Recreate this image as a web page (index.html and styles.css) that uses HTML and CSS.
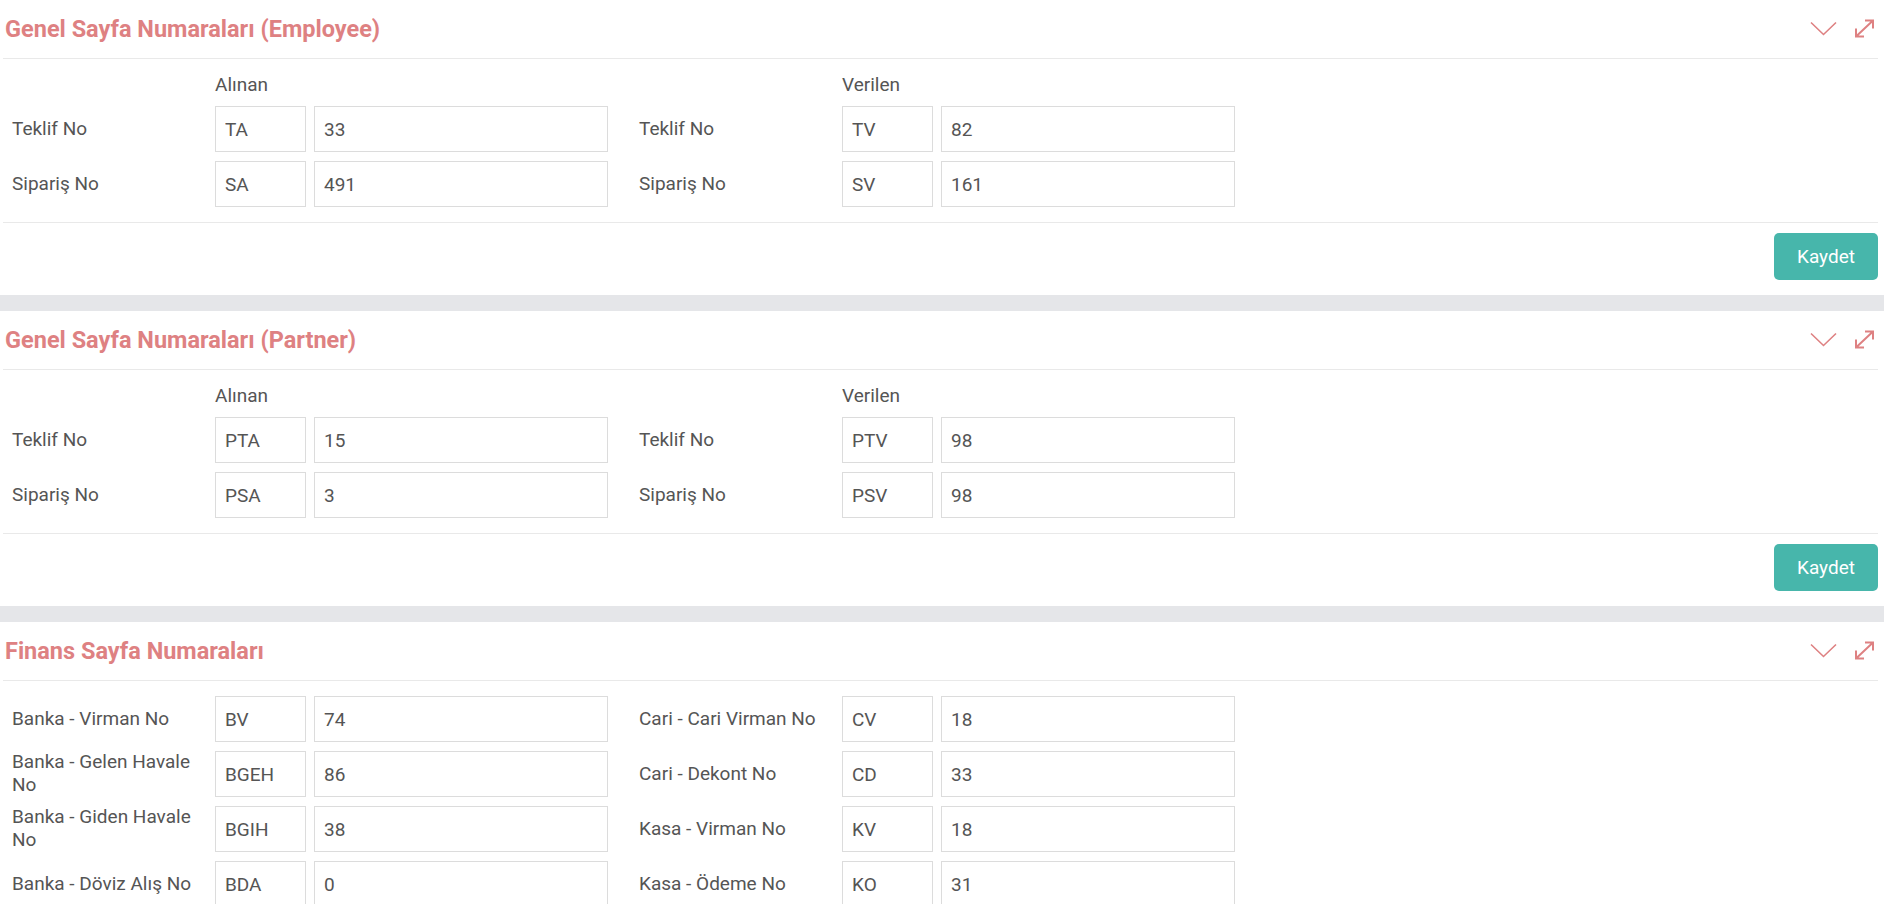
FILE: index.html
```html
<!DOCTYPE html>
<html lang="tr">

<head>
  <meta charset="utf-8">
  <title>Sayfa Numaraları</title>
  <link rel="stylesheet" href="styles.css">
</head>

<body>
  <!-- Genel (Employee) -->
  <div class="panel">
    <div class="panel-head">
      <h3>Genel Sayfa Numaraları (Employee)</h3>
      <div class="tools">
        <svg class="ico-collapse" width="27" height="15" viewBox="0 0 27 15"><polyline points="1,1.5 13.5,13.5 26,1.5" /></svg>
        <svg class="ico-expand" width="21" height="19" viewBox="0 0 21 19"><path d="M2 17.5 L19 1.5 M11 1.5 H19 V9.5 M2 9.5 V17.5 H10" /></svg>
      </div>
    </div>
    <div class="panel-body">
      <div class="row heads">
        <div class="pair"><span class="label"></span><span class="colhead">Alınan</span></div>
        <div class="pair"><span class="label"></span><span class="colhead">Verilen</span></div>
      </div>
      <div class="row">
        <div class="pair">
          <label class="label">Teklif No</label>
          <input class="prefix" type="text" value="TA">
          <input class="number" type="text" value="33">
        </div>
        <div class="pair">
          <label class="label">Teklif No</label>
          <input class="prefix" type="text" value="TV">
          <input class="number" type="text" value="82">
        </div>
      </div>
      <div class="row">
        <div class="pair">
          <label class="label">Sipariş No</label>
          <input class="prefix" type="text" value="SA">
          <input class="number" type="text" value="491">
        </div>
        <div class="pair">
          <label class="label">Sipariş No</label>
          <input class="prefix" type="text" value="SV">
          <input class="number" type="text" value="161">
        </div>
      </div>
    </div>
    <div class="panel-foot">
      <button type="button" class="btn-save">Kaydet</button>
    </div>
  </div>

  <!-- Genel (Partner) -->
  <div class="panel">
    <div class="panel-head">
      <h3>Genel Sayfa Numaraları (Partner)</h3>
      <div class="tools">
        <svg class="ico-collapse" width="27" height="15" viewBox="0 0 27 15"><polyline points="1,1.5 13.5,13.5 26,1.5" /></svg>
        <svg class="ico-expand" width="21" height="19" viewBox="0 0 21 19"><path d="M2 17.5 L19 1.5 M11 1.5 H19 V9.5 M2 9.5 V17.5 H10" /></svg>
      </div>
    </div>
    <div class="panel-body">
      <div class="row heads">
        <div class="pair"><span class="label"></span><span class="colhead">Alınan</span></div>
        <div class="pair"><span class="label"></span><span class="colhead">Verilen</span></div>
      </div>
      <div class="row">
        <div class="pair">
          <label class="label">Teklif No</label>
          <input class="prefix" type="text" value="PTA">
          <input class="number" type="text" value="15">
        </div>
        <div class="pair">
          <label class="label">Teklif No</label>
          <input class="prefix" type="text" value="PTV">
          <input class="number" type="text" value="98">
        </div>
      </div>
      <div class="row">
        <div class="pair">
          <label class="label">Sipariş No</label>
          <input class="prefix" type="text" value="PSA">
          <input class="number" type="text" value="3">
        </div>
        <div class="pair">
          <label class="label">Sipariş No</label>
          <input class="prefix" type="text" value="PSV">
          <input class="number" type="text" value="98">
        </div>
      </div>
    </div>
    <div class="panel-foot">
      <button type="button" class="btn-save">Kaydet</button>
    </div>
  </div>

  <!-- Finans -->
  <div class="panel">
    <div class="panel-head">
      <h3>Finans Sayfa Numaraları</h3>
      <div class="tools">
        <svg class="ico-collapse" width="27" height="15" viewBox="0 0 27 15"><polyline points="1,1.5 13.5,13.5 26,1.5" /></svg>
        <svg class="ico-expand" width="21" height="19" viewBox="0 0 21 19"><path d="M2 17.5 L19 1.5 M11 1.5 H19 V9.5 M2 9.5 V17.5 H10" /></svg>
      </div>
    </div>
    <div class="panel-body finance">
      <div class="row">
        <div class="pair">
          <label class="label">Banka - Virman No</label>
          <input class="prefix" type="text" value="BV">
          <input class="number" type="text" value="74">
        </div>
        <div class="pair">
          <label class="label">Cari - Cari Virman No</label>
          <input class="prefix" type="text" value="CV">
          <input class="number" type="text" value="18">
        </div>
      </div>
      <div class="row">
        <div class="pair">
          <label class="label">Banka - Gelen Havale No</label>
          <input class="prefix" type="text" value="BGEH">
          <input class="number" type="text" value="86">
        </div>
        <div class="pair">
          <label class="label">Cari - Dekont No</label>
          <input class="prefix" type="text" value="CD">
          <input class="number" type="text" value="33">
        </div>
      </div>
      <div class="row">
        <div class="pair">
          <label class="label">Banka - Giden Havale No</label>
          <input class="prefix" type="text" value="BGIH">
          <input class="number" type="text" value="38">
        </div>
        <div class="pair">
          <label class="label">Kasa - Virman No</label>
          <input class="prefix" type="text" value="KV">
          <input class="number" type="text" value="18">
        </div>
      </div>
      <div class="row">
        <div class="pair">
          <label class="label">Banka - Döviz Alış No</label>
          <input class="prefix" type="text" value="BDA">
          <input class="number" type="text" value="0">
        </div>
        <div class="pair">
          <label class="label">Kasa - Ödeme No</label>
          <input class="prefix" type="text" value="KO">
          <input class="number" type="text" value="31">
        </div>
      </div>
    </div>
  </div>
</body>

</html>
```

FILE: styles.css
```css
* {
  margin: 0;
  padding: 0;
  box-sizing: border-box;
}

html {
  overflow: hidden;
}

body {
  font-family: 'Roboto', sans-serif;
  font-size: 19px;
  color: #555;
  background-color: #e5e6e9;
  line-height: 1.2;
}

.panel {
  background-color: #fff;
  padding: 0 6px 0 3px;
  margin-bottom: 16px;
}

.panel-head {
  display: flex;
  align-items: center;
  justify-content: space-between;
  height: 59px;
  padding: 0 3px 0 2px;
  border-bottom: 1px solid #e9e9e9;
}

.panel-head h3 {
  font-size: 23.5px;
  font-weight: 700;
  color: #de8182;
}

.tools {
  display: flex;
  align-items: center;
  gap: 17px;
  padding-bottom: 2px;
}

.tools svg {
  fill: none;
  stroke: #de8182;
}

.ico-collapse {
  stroke-width: 1.6;
}

.ico-expand {
  stroke-width: 2;
}

.panel-body {
  display: flex;
  flex-direction: column;
  gap: 9px;
  padding: 15px 0 15px;
  border-bottom: 1px solid #e9e9e9;
}

.panel-body.finance {
  padding-top: 15px;
}

.row {
  display: flex;
  gap: 22px;
}

.row.heads {
  margin-bottom: 1px;
}

.pair {
  display: flex;
  align-items: center;
  width: 605px;
}

.label {
  width: 212px;
  flex-shrink: 0;
  padding: 0 13px 0 9px;
}

.colhead {
  line-height: 22px;
}

input {
  font-family: 'Roboto', sans-serif;
  font-size: 19px;
  color: #555;
  height: 46px;
  padding: 0 9px;
  border: 1px solid #dcdcdc;
  background-color: #fff;
  outline: none;
}

.prefix {
  width: 91px;
}

.number {
  width: 294px;
  margin-left: 8px;
}

.panel-foot {
  display: flex;
  justify-content: flex-end;
  padding: 10px 0 15px;
}

.btn-save {
  font-family: 'Roboto', sans-serif;
  font-size: 19px;
  color: #fff;
  background-color: #47b6ab;
  border: none;
  border-radius: 5px;
  width: 104px;
  height: 47px;
}
```
